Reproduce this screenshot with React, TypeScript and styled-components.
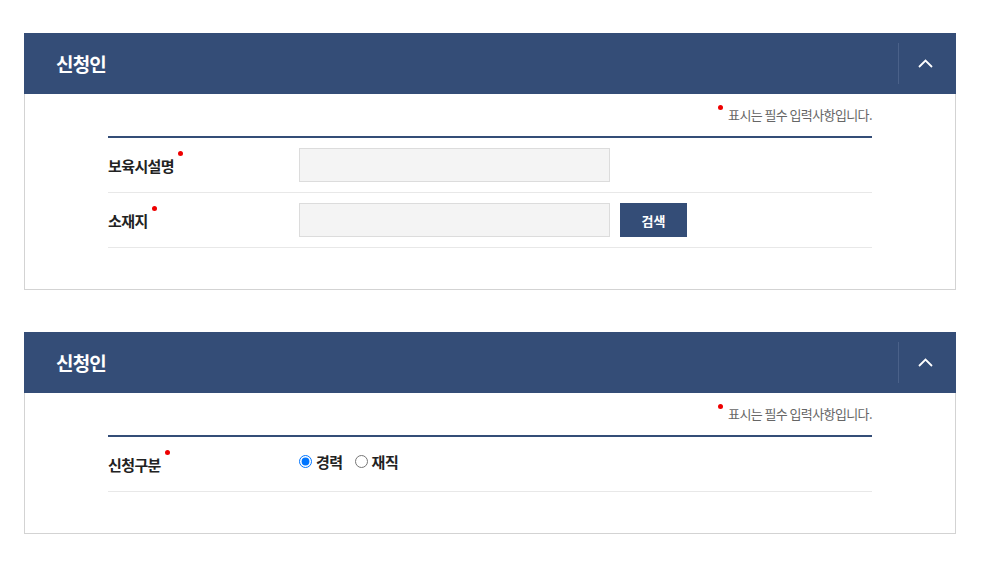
import React from 'react';
import styled, { createGlobalStyle } from 'styled-components';

const GlobalStyle = createGlobalStyle`
  body {
    margin: 0;
    background: #fff;
    font-family: 'Noto Sans CJK KR', 'Noto Sans', sans-serif;
    color: #222;
  }
`;

const Page = styled.div`
  padding: 33px 35px 0 24px;
  display: flex;
  flex-direction: column;
  gap: 42px;
`;

const Panel = styled.section`
  width: 932px;
`;

const Header = styled.div`
  height: 61px;
  background: #344d77;
  display: flex;
  align-items: center;
  justify-content: space-between;
  padding-left: 32px;
`;

const Title = styled.h2`
  margin: 0;
  color: #fff;
  font-size: 19px;
  font-weight: 700;
  letter-spacing: -0.8px;
`;

const Toggle = styled.button`
  width: 58px;
  height: 41px;
  border: 0;
  border-left: 1px solid #4a6189;
  background: transparent;
  display: flex;
  align-items: center;
  justify-content: center;
  cursor: pointer;
  padding: 0 4px 0 0;
`;

const Body = styled.div<{ $bottom: number }>`
  border: 1px solid #d3d3d3;
  border-top: 0;
  padding: 12px 83px ${(p) => p.$bottom}px 83px;
`;

const Note = styled.p`
  margin: 0 0 12px;
  text-align: right;
  font-size: 13px;
  color: #666;
  letter-spacing: -0.6px;
  line-height: 18px;
`;

const Dot = styled.span`
  display: inline-block;
  width: 5px;
  height: 5px;
  border-radius: 50%;
  background: #ee0000;
  vertical-align: top;
  margin: -1px 5px 0 0;
`;

const Table = styled.div`
  border-top: 2px solid #344d77;
`;

const Row = styled.div`
  display: flex;
  align-items: center;
  height: 54px;
  border-bottom: 1px solid #e8e8e8;
`;

const Label = styled.div`
  width: 191px;
  font-size: 15px;
  font-weight: 700;
  color: #222;
  letter-spacing: -0.6px;
`;

const LabelDot = styled.span`
  display: inline-block;
  width: 5px;
  height: 5px;
  border-radius: 50%;
  background: #ee0000;
  vertical-align: top;
  margin: -4px 0 0 4px;
`;

const Field = styled.div`
  display: flex;
  align-items: center;
  gap: 10px;
`;

const Input = styled.input`
  width: 311px;
  height: 34px;
  box-sizing: border-box;
  background: #f4f4f4;
  border: 1px solid #dcdcdc;
  padding: 0 10px;
  font-family: inherit;
`;

const Button = styled.button`
  width: 67px;
  height: 34px;
  border: 0;
  background: #344d77;
  color: #fff;
  font-family: inherit;
  font-size: 13px;
  font-weight: 700;
  cursor: pointer;
`;

const RadioGroup = styled.div`
  display: flex;
  align-items: center;
  gap: 12px;
  margin-top: -5px;
`;

const RadioLabel = styled.label`
  display: inline-flex;
  align-items: center;
  gap: 4px;
  font-size: 15px;
  font-weight: 700;
  color: #222;
  letter-spacing: -0.5px;

  input {
    margin: 0;
    width: 13px;
    height: 13px;
  }
`;

const Chevron = () => (
  <svg width="15" height="9" viewBox="0 0 15 9">
    <path d="M1 8 L7.5 1.5 L14 8" fill="none" stroke="#fff" strokeWidth="1.8" />
  </svg>
);

const Required = () => (
  <Note>
    <Dot />
    표시는 필수 입력사항입니다.
  </Note>
);

export default function App() {
  return (
    <>
      <GlobalStyle />
      <Page>
        <Panel>
          <Header>
            <Title>신청인</Title>
            <Toggle aria-label="접기">
              <Chevron />
            </Toggle>
          </Header>
          <Body $bottom={41}>
            <Required />
            <Table>
              <Row>
                <Label>
                  보육시설명
                  <LabelDot />
                </Label>
                <Field>
                  <Input type="text" />
                </Field>
              </Row>
              <Row>
                <Label>
                  소재지
                  <LabelDot />
                </Label>
                <Field>
                  <Input type="text" />
                  <Button>검색</Button>
                </Field>
              </Row>
            </Table>
          </Body>
        </Panel>

        <Panel>
          <Header>
            <Title>신청인</Title>
            <Toggle aria-label="접기">
              <Chevron />
            </Toggle>
          </Header>
          <Body $bottom={41}>
            <Required />
            <Table>
              <Row>
                <Label>
                  신청구분
                  <LabelDot />
                </Label>
                <RadioGroup>
                  <RadioLabel>
                    <input type="radio" name="kind" defaultChecked />
                    경력
                  </RadioLabel>
                  <RadioLabel>
                    <input type="radio" name="kind" />
                    재직
                  </RadioLabel>
                </RadioGroup>
              </Row>
            </Table>
          </Body>
        </Panel>
      </Page>
    </>
  );
}
